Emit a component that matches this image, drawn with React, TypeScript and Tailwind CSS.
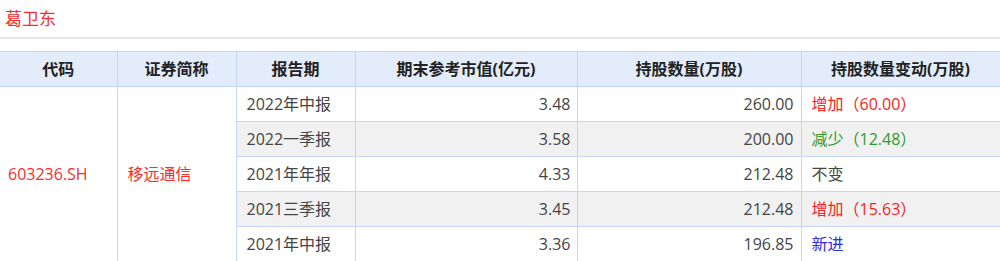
import React from "react";

interface Row {
  period: string;
  value: string;
  shares: string;
  change: string;
  tone: "up" | "down" | "flat" | "new";
}

const rows: Row[] = [
  { period: "2022年中报", value: "3.48", shares: "260.00", change: "增加（60.00）", tone: "up" },
  { period: "2022一季报", value: "3.58", shares: "200.00", change: "减少（12.48）", tone: "down" },
  { period: "2021年年报", value: "4.33", shares: "212.48", change: "不变", tone: "flat" },
  { period: "2021三季报", value: "3.45", shares: "212.48", change: "增加（15.63）", tone: "up" },
  { period: "2021年中报", value: "3.36", shares: "196.85", change: "新进", tone: "new" },
];

const toneClass = {
  up: "text-[#ff2121]",
  down: "text-[#2f9a2f]",
  flat: "text-[#444444]",
  new: "text-[#2b2bf0]",
};

const headers = ["代码", "证券简称", "报告期", "期末参考市值(亿元)", "持股数量(万股)", "持股数量变动(万股)"];

const App = () => {
  return (
    <div
      className="w-[1000px] h-[261px] overflow-hidden bg-white text-[16px] text-[#444444]"
      style={{ fontFamily: '"Open Sans", "Noto Sans CJK SC", sans-serif' }}
    >
      <div className="h-[37px] pl-[5px] pt-[8px] text-[17px] text-[#ff2a2a] leading-[22px]">葛卫东</div>
      <div className="h-[2px] bg-[#e6e6e6]" />
      <table className="mt-[12px] w-[1010px] table-fixed border-collapse">
        <colgroup>
          <col className="w-[117px]" />
          <col className="w-[119px]" />
          <col className="w-[119px]" />
          <col className="w-[222px]" />
          <col className="w-[224px]" />
          <col className="w-[209px]" />
        </colgroup>
        <thead>
          <tr className="h-[35px] bg-[#e3ecfa]">
            {headers.map((h, i) => (
              <th
                key={h}
                className={`border border-[#c3d6f7] ${i === 0 ? "border-l-0" : ""} ${
                  i === 5 ? "pr-[10px]" : ""
                } text-center font-bold text-[16px] text-[#222222]`}
              >
                {h}
              </th>
            ))}
          </tr>
        </thead>
        <tbody>
          {rows.map((r, i) => (
            <tr key={r.period} className="h-[35px]">
              {i === 0 && (
                <>
                  <td rowSpan={5} className="border border-l-0 border-[#c3d6f7] pl-[8px] text-[#ff2a2a]">
                    603236.SH
                  </td>
                  <td rowSpan={5} className="border border-[#c3d6f7] pl-[10px] text-[#ff2a2a]">
                    移远通信
                  </td>
                </>
              )}
              <td className={`border border-[#c3d6f7] pl-[10px] ${i % 2 ? "bg-[#f1f1f1]" : ""}`}>{r.period}</td>
              <td className={`border border-[#c3d6f7] pr-[6px] text-right ${i % 2 ? "bg-[#f1f1f1]" : ""}`}>
                {r.value}
              </td>
              <td className={`border border-[#c3d6f7] pr-[7px] text-right ${i % 2 ? "bg-[#f1f1f1]" : ""}`}>
                {r.shares}
              </td>
              <td className={`border border-[#c3d6f7] pl-[10px] ${toneClass[r.tone]} ${i % 2 ? "bg-[#f1f1f1]" : ""}`}>
                {r.change}
              </td>
            </tr>
          ))}
        </tbody>
      </table>
    </div>
  );
};

export default App;
